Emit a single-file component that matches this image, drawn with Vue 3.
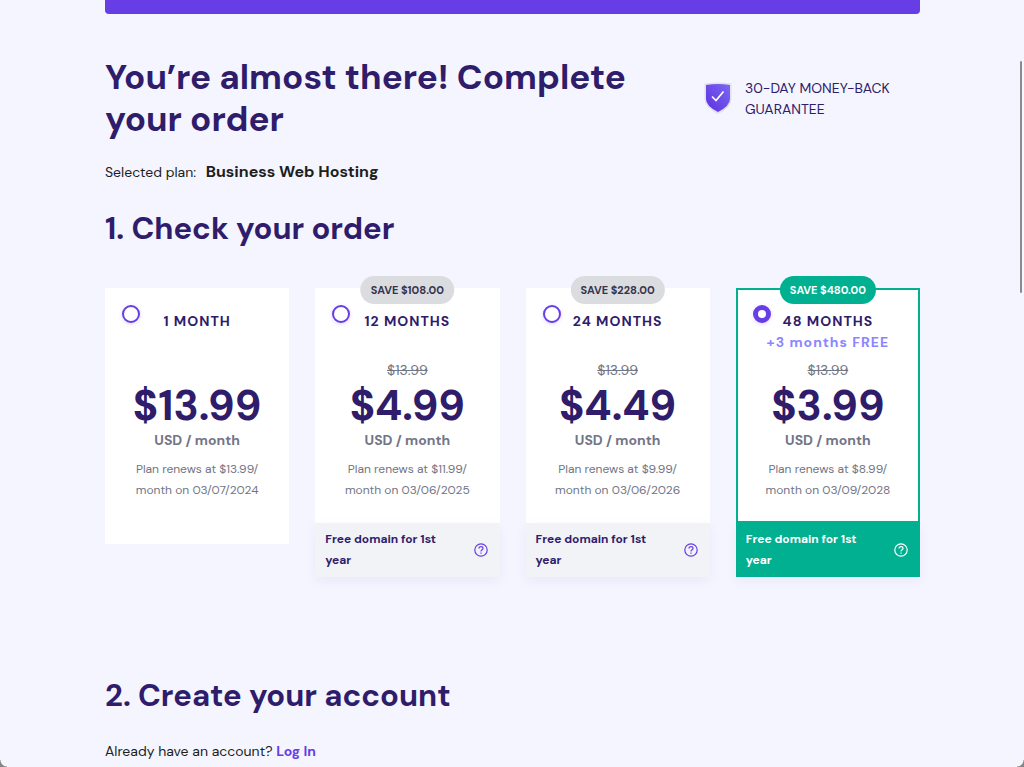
<script setup>
import { ref } from 'vue'

const selected = ref('48')

const plans = [
  { id: '1', term: '1 MONTH', price: '$13.99', renew: '$13.99/', date: '03/07/2024' },
  { id: '12', term: '12 MONTHS', save: 'SAVE $108.00', old: '$13.99', price: '$4.99', renew: '$11.99/', date: '03/06/2025', perk: true },
  { id: '24', term: '24 MONTHS', save: 'SAVE $228.00', old: '$13.99', price: '$4.49', renew: '$9.99/', date: '03/06/2026', perk: true },
  { id: '48', term: '48 MONTHS', bonus: '+3 months FREE', save: 'SAVE $480.00', old: '$13.99', price: '$3.99', renew: '$8.99/', date: '03/09/2028', perk: true },
]
</script>

<template>
  <main class="page">
    <div class="banner"></div>

    <header class="intro">
      <h1>You’re almost there! Complete your order</h1>
      <div class="guarantee">
        <svg class="shield" viewBox="0 0 32 36" aria-hidden="true">
          <defs>
            <linearGradient id="shieldFill" x1="1" y1="0" x2="0" y2="1">
              <stop offset="0" stop-color="#7b68f2" />
              <stop offset="1" stop-color="#5f2fe0" />
            </linearGradient>
          </defs>
          <path d="M2.500 3.500Q16 1.500 29.500 3.500V19Q29.500 27.500 16 34Q2.500 27.500 2.500 19Z" fill="#e0e0ee" />
          <path d="M4 5Q16 3 28 5V19Q28 26 16 32Q4 26 4 19Z" fill="url(#shieldFill)" />
          <path d="M10 16.500L14 20.500L21.500 11.500" fill="none" stroke="#fff" stroke-width="1.600" />
        </svg>
        <p>30-DAY MONEY-BACK GUARANTEE</p>
      </div>
    </header>

    <p class="chosen">Selected plan: <strong>Business Web Hosting</strong></p>

    <section>
      <h2 id="order-title">1. Check your order</h2>
      <div class="plans" role="radiogroup" aria-labelledby="order-title">
        <article
          v-for="plan in plans"
          :key="plan.id"
          class="plan"
          :class="{ active: selected === plan.id, perked: plan.perk }"
        >
          <span v-if="plan.save" class="save">{{ plan.save }}</span>
          <input :id="'plan-' + plan.id" v-model="selected" type="radio" name="plan" :value="plan.id" />
          <div class="body">
            <label class="term" :for="'plan-' + plan.id">{{ plan.term }}</label>
            <p class="bonus">{{ plan.bonus }}</p>
            <p class="old"><s>{{ plan.old }}</s></p>
            <p class="price">{{ plan.price }}</p>
            <p class="unit">USD / month</p>
            <p class="renew">Plan renews at {{ plan.renew }}<br />month on {{ plan.date }}</p>
          </div>
          <footer v-if="plan.perk" class="perk">
            <span>Free domain for 1st year</span>
            <button type="button" aria-label="About the free domain">
              <svg viewBox="0 0 14 14" aria-hidden="true" fill="none" stroke="currentColor" stroke-width="1.200">
                <circle cx="7" cy="7" r="6.200" />
                <path d="M5 5.600C5 4.400 5.900 3.700 7 3.700S9 4.400 9 5.500C9 6.800 7 6.900 7 8.400" />
                <path d="M7 9.500V10.800" />
              </svg>
            </button>
          </footer>
        </article>
      </div>
    </section>

    <section class="account">
      <h2>2. Create your account</h2>
      <p class="login">Already have an account? <a href="#login">Log In</a></p>
    </section>

    <div class="thumb"></div>
    <div class="corner left"></div>
    <div class="corner right"></div>
  </main>
</template>

<style>
body {
  background: #f4f5ff;
}
</style>

<style scoped>
.page {
  padding: 0 104px 0 105px;
  color: #1d1e20;
  font-family: "DM Sans", Inter, sans-serif;
  font-size: 14px;
  line-height: 21px;
}
h1, h2, p {
  margin: 0;
}
h1, h2 {
  color: #2f1c6a;
  font-weight: 700;
}
.banner {
  height: 14px;
  border-radius: 0 0 4px 4px;
  background: #673de6;
}
.intro {
  display: flex;
  justify-content: space-between;
  padding-top: 42px;
}
h1 {
  max-width: 560px;
  font-size: 35px;
  line-height: 42px;
}
.guarantee {
  display: flex;
  flex: 0 0 218px;
  gap: 11px;
  align-items: center;
  height: 84px;
  color: #2f1c6a;
}
.guarantee p {
  max-width: 160px;
  padding-top: 2px;
}
.shield {
  flex: none;
  width: 32px;
  height: 36px;
}
.chosen {
  padding-top: 21px;
}
.chosen strong {
  margin-left: 6px;
  font-size: 16px;
}
h2 {
  padding-top: 26px;
  font-size: 31px;
  line-height: 40px;
}
.plans {
  display: grid;
  grid-template-columns: repeat(4, 1fr);
  gap: 26px;
  align-items: start;
  padding-top: 39px;
}
.plan {
  position: relative;
  padding-bottom: 21px;
  background: #fff;
}
.plan.perked {
  padding-bottom: 0;
}
.body {
  display: flex;
  flex-direction: column;
  padding: 23px 10px 22px;
  text-align: center;
}
.active .body {
  padding: 21px 8px 20px;
  border: 2px solid #00b090;
  border-bottom: 0;
}
.save {
  position: absolute;
  top: -12px;
  left: 50%;
  padding: 0 10px;
  border-radius: 14px;
  background: #dadce0;
  color: #36344d;
  font-size: 11px;
  font-weight: 700;
  line-height: 28px;
  white-space: nowrap;
  transform: translateX(-50%);
}
.active .save {
  background: #00b090;
  color: #fff;
}
input {
  position: absolute;
  top: 17px;
  left: 17px;
  width: 18px;
  height: 18px;
  margin: 0;
  border: 2px solid #673de6;
  border-radius: 50%;
  background: #fff;
  box-shadow: 0 1px 4px #673de633;
  appearance: none;
}
input:checked {
  border-width: 5px;
}
.term, .bonus {
  min-height: 21px;
  color: #2f1c6a;
  font-weight: 700;
  letter-spacing: 1px;
}
.bonus {
  color: #8c85ff;
}
.old {
  height: 21px;
  margin-top: 7px;
  color: #727586;
}
.price {
  color: #2f1c6a;
  font-size: 42px;
  font-weight: 700;
  line-height: 49px;
}
.unit {
  color: #727586;
  font-weight: 700;
}
.renew {
  padding-top: 8px;
  color: #727586;
  font-size: 12px;
}
.perk {
  display: flex;
  justify-content: space-between;
  align-items: center;
  padding: 6px 12px 6px 10px;
  background: #f2f3f6;
  box-shadow: 0 4px 12px #2f1c6a0d;
  color: #2f1c6a;
  font-size: 12px;
  font-weight: 700;
}
.perk span {
  max-width: 125px;
}
.active .perk {
  padding-top: 8px;
  background: #00b090;
  color: #fff;
}
button {
  display: flex;
  padding: 0;
  border: 0;
  background: none;
  color: #673de6;
}
.active button {
  color: #fff;
}
button svg {
  width: 14px;
  height: 14px;
}
.account {
  padding-top: 73px;
}
.login {
  padding: 25px 0 4px;
}
a {
  color: #673de6;
  font-weight: 700;
  text-decoration: none;
}
.thumb {
  position: fixed;
  top: 61px;
  right: 2px;
  width: 2px;
  height: 232px;
  border-radius: 1px;
  background: #8b8b8f;
}
.corner {
  position: fixed;
  bottom: 0;
  width: 7px;
  height: 7px;
}
.left {
  left: 0;
  background: radial-gradient(circle at 100% 0, #f4f5ff 6px, #858585 7px);
}
.right {
  right: 0;
  background: radial-gradient(circle at 0 0, #f4f5ff 6px, #858585 7px);
}
</style>
